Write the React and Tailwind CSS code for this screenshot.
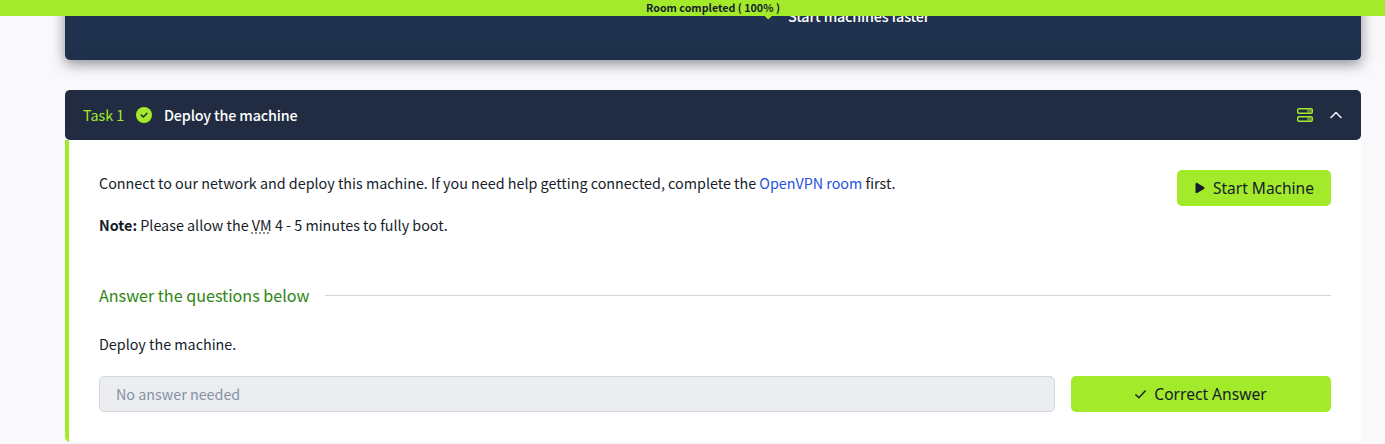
import { FaPlay } from "react-icons/fa6";

function CompletedIcon() {
  return (
    <svg width="16" height="16" viewBox="0 0 16 16" fill="none">
      <circle cx="8" cy="8" r="8" fill="#a3ea2a" />
      <path d="m5.3 8.1 2 1.9 3.5-3.6" stroke="#212c42" strokeWidth="1.5" strokeLinecap="round" strokeLinejoin="round" />
    </svg>
  );
}

function ServerIcon() {
  return (
    <svg width="16" height="14" viewBox="0 0 16 14" fill="none" className="text-[#a3ea2a]">
      <rect x="0.7" y="0.7" width="14.6" height="4.6" rx="1.2" stroke="currentColor" strokeWidth="1.4" />
      <rect x="0.7" y="8.7" width="14.6" height="4.6" rx="1.2" stroke="currentColor" strokeWidth="1.4" />
      <rect x="10" y="1.4" width="4.6" height="3.2" fill="currentColor" opacity="0.5" />
      <rect x="10" y="9.4" width="4.6" height="3.2" fill="currentColor" opacity="0.5" />
    </svg>
  );
}

function TaskHeader() {
  return (
    <div className="flex h-[50px] items-center rounded-[5px] bg-[#212c42] pr-[19px] pl-[18px] text-[14.33px] leading-6">
      <span className="w-[53px] whitespace-nowrap text-[#a3ea2a]">Task 1</span>
      <CompletedIcon />
      <span className="ml-3 font-medium tracking-[-0.16px] whitespace-nowrap text-white">Deploy the machine</span>
      <div className="ml-auto flex items-center gap-[17px]">
        <ServerIcon />
        <svg width="12" height="8" viewBox="0 0 12 8" fill="none" stroke="#eceef2" strokeWidth="1.6" strokeLinecap="round" strokeLinejoin="round">
          <path d="M1 6.5 6 1.5l5 5" />
        </svg>
      </div>
    </div>
  );
}

function TaskBody() {
  return (
    <div className="h-[302px] rounded-b-[5px] border-l-4 border-[#a3ea2a] bg-white pt-[30px] pr-[30px] pl-[30px]">
      <div className="flex justify-between">
        <div className="pt-px text-[14.33px] leading-6">
          <p className="whitespace-nowrap">
            Connect to our network and deploy this machine. If you need help getting connected, complete the{" "}
            <a className="text-[#1f52e0]">OpenVPN room</a> first.
          </p>
          <p className="mt-[18px] whitespace-nowrap">
            <b className="font-bold">Note:</b> Please allow the{" "}
            <span className="underline decoration-[#8b8e99] decoration-dotted decoration-2 underline-offset-1">VM</span> 4 - 5 minutes to fully boot.
          </p>
        </div>
        <button className="flex h-9 w-[154px] items-center rounded-[5px] bg-[#a3ea2a] pl-[18px] font-['Noto_Sans',sans-serif] text-[15.5px]">
          <FaPlay className="mr-2 h-3 w-[10px]" />
          <span className="pt-px whitespace-nowrap">Start Machine</span>
        </button>
      </div>
      <div className="mt-[44px] flex h-7 items-center gap-4">
        <h2 className="text-[16.12px] whitespace-nowrap text-[#2f8512]">Answer the questions below</h2>
        <div className="h-px flex-1 bg-[#d1d7dc]" />
      </div>
      <p className="mt-[23px] text-[14.33px] leading-6">Deploy the machine.</p>
      <div className="mt-5 flex gap-4">
        <div className="flex h-9 flex-1 items-center rounded-[5px] border border-[#d3d8df] bg-[#ecedf1] pl-4 text-[14.33px] text-[#8591a5]">
          No answer needed
        </div>
        <button className="flex h-9 w-[260px] items-center justify-center gap-2 rounded-[5px] bg-[#a3ea2a] font-['Noto_Sans',sans-serif] text-[15.6px]">
          <svg width="11" height="9" viewBox="0 0 11 9" fill="none" stroke="currentColor" strokeWidth="1.4" strokeLinecap="round" strokeLinejoin="round">
            <path d="m.8 4.7 3 3L10.2 1" />
          </svg>
          <span className="pt-0.5 whitespace-nowrap">Correct Answer</span>
        </button>
      </div>
    </div>
  );
}

export default function App() {
  return (
    <div className="h-[444px] overflow-hidden bg-[#f9f9fb] font-['Noto_Sans_CJK_SC',sans-serif] text-[#151c2b]">
      <div className="relative z-10 flex h-4 items-start justify-center bg-[#a3ea2a] pl-[41px] text-[10.7px] leading-4 font-bold">
        Room completed ( 100% )
      </div>
      <div className="mr-6 ml-[65px]">
        <div className="-mt-4 h-[60px] rounded-b-[5px] bg-linear-to-b from-[#213351] to-[#1f304b] shadow-[0_4px_14px_0px_rgba(33,30,45,0.5)]">
          <div className="flex items-start pt-1 pl-[697px]">
            <svg width="16" height="16" viewBox="0 0 16 16" fill="none" className="text-[#a3ea2a]" stroke="currentColor" strokeWidth="2.4" strokeLinecap="round" strokeLinejoin="round">
              <path d="m2 9.5 4.3 4.5L14 6" />
            </svg>
            <span className="ml-[10px] text-[14.33px] leading-6 font-medium tracking-[-0.16px] whitespace-nowrap text-white">Start machines faster</span>
          </div>
        </div>
        <div className="mt-[30px] rounded-[5px] bg-[#f9f9fb]">
          <TaskHeader />
          <TaskBody />
        </div>
      </div>
    </div>
  );
}
